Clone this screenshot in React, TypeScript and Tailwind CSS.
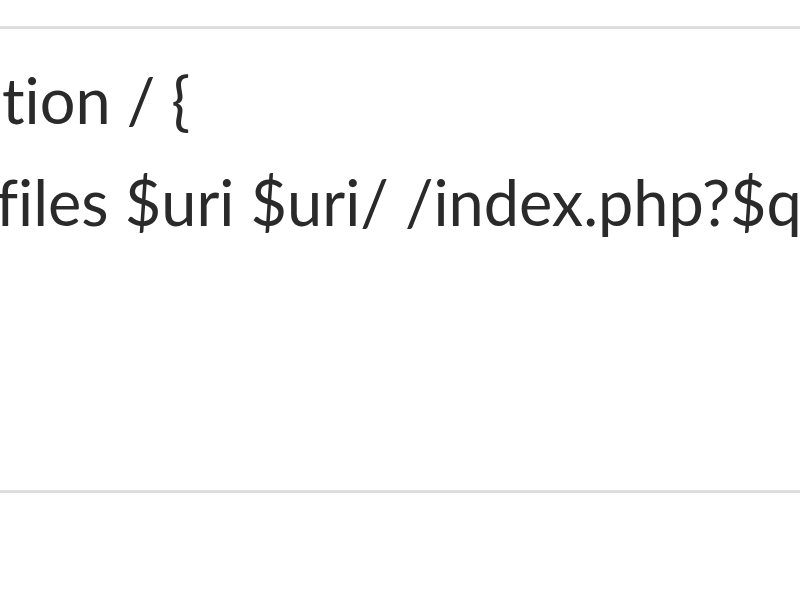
const lines = ['tion / {', 'files $uri $uri/ /index.php?$query_string;']

export default function App() {
  return (
    <div className="w-[800px] h-[600px] bg-white overflow-hidden pt-[26px]">
      <div className="border-y-[3px] border-[#dedede] h-[467px] overflow-hidden pt-[20px]">
        <pre className="m-0 font-['Lato','Open_Sans',sans-serif] text-[63px] leading-[102px] text-[#2a2a2a] whitespace-pre [font-variant-ligatures:none]">
          <div className="pl-[2px]">{lines[0]}</div>
          <div className="-ml-[4px]">{lines[1]}</div>
        </pre>
      </div>
    </div>
  )
}
